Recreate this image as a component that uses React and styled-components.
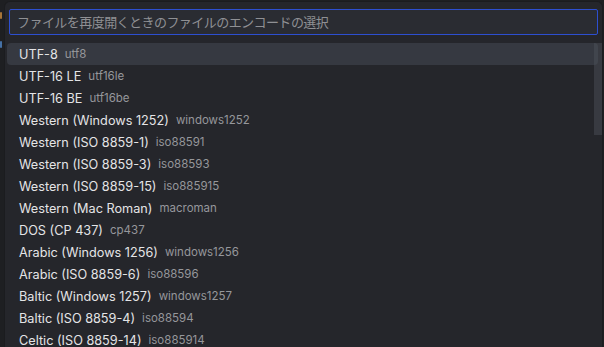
import React from 'react';
import styled, { createGlobalStyle } from 'styled-components';

const encodings = [
    ['UTF-8', 'utf8'],
    ['UTF-16 LE', 'utf16le'],
    ['UTF-16 BE', 'utf16be'],
    ['Western (Windows 1252)', 'windows1252'],
    ['Western (ISO 8859-1)', 'iso88591'],
    ['Western (ISO 8859-3)', 'iso88593'],
    ['Western (ISO 8859-15)', 'iso885915'],
    ['Western (Mac Roman)', 'macroman'],
    ['DOS (CP 437)', 'cp437'],
    ['Arabic (Windows 1256)', 'windows1256'],
    ['Arabic (ISO 8859-6)', 'iso88596'],
    ['Baltic (Windows 1257)', 'windows1257'],
    ['Baltic (ISO 8859-4)', 'iso88594'],
    ['Celtic (ISO 8859-14)', 'iso885914'],
];

const EncodingPicker = () => {
    return(
        <Screen>
            <Gutter>
                <Mark color="#c98a3c" top={12} />
                <Mark color="#4f86c8" top={22} />
            </Gutter>
            <Panel>
                <Search placeholder="ファイルを再度開くときのファイルのエンコードの選択" />
                <List>
                    {encodings.map(([label, id], i) => (
                        <Row key={id} active={i === 0}>
                            <Label>{label}</Label>
                            <Desc>{id}</Desc>
                        </Row>
                    ))}
                    <Scrollbar />
                </List>
            </Panel>
        </Screen>
    );
};

const Global = createGlobalStyle`
    html, body {
        margin: 0;
        padding: 0;
        background: #1e1f22;
        overflow: hidden;
    }
`;

const Screen = styled.div`
    display: flex;
    width: 604px;
    height: 347px;
    overflow: hidden;
    background: #1e1f22;
    font-family: Inter, "Noto Sans CJK JP", sans-serif;
`;

const Gutter = styled.div`
    width: 4px;
    flex-shrink: 0;
    display: flex;
    flex-direction: column;
`;

// fragments of editor text peeking out from behind the picker
const Mark = styled.div`
    width: 2px;
    height: 7px;
    margin-top: ${p => p.top}px;
    border-radius: 1px;
    background: ${p => p.color};
    opacity: 0.8;
`;

const Panel = styled.div`
    flex: 1;
    margin: 1px 1px 0 0;
    padding: 7px 0 0 3px;
    background: #25262b;
    border: 1px solid #1b1c1f;
    border-bottom: none;
    border-radius: 6px 6px 0 0;
    display: flex;
    flex-direction: column;
    overflow: hidden;
`;

const Search = styled.input`
    box-sizing: border-box;
    flex-shrink: 0;
    width: 589px;
    height: 26px;
    margin-left: 1px;
    padding: 0 7px;
    background: #2a2c32;
    border: 1px solid #2d4fd0;
    border-radius: 2px;
    color: #cccccc;
    font-family: Inter, "Noto Sans CJK JP", sans-serif;
    font-size: 13px;
    letter-spacing: -0.55px;
    outline: none;
    &::placeholder {
        color: #8f9094;
    }
`;

const List = styled.div`
    position: relative;
    flex-shrink: 0;
    margin-top: 8px;
    width: 590px;
`;

const Row = styled.div`
    display: flex;
    align-items: center;
    gap: 7px;
    height: 22px;
    padding-left: 12px;
    margin-left: -1px;
    border-radius: 4px;
    background: ${p => (p.active ? '#363941' : 'transparent')};
`;

const Label = styled.span`
    font-size: 12.7px;
    color: #e4e4e6;
`;

const Desc = styled.span`
    font-size: 11.5px;
    color: #96979b;
`;

const Scrollbar = styled.div`
    position: absolute;
    top: 0;
    right: -6px;
    width: 10px;
    height: 92px;
    background: rgba(80, 84, 94, 0.45);
`;

export default function App() {
    return (
        <>
            <Global />
            <EncodingPicker />
        </>
    );
}
